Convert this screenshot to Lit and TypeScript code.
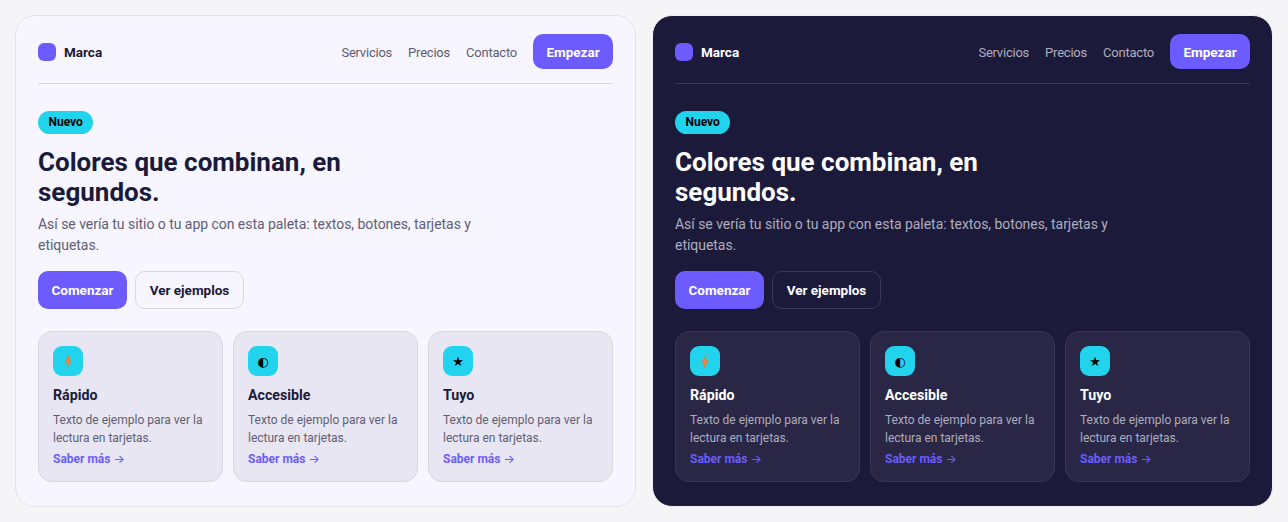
import { LitElement, html, css } from "lit";
import { customElement, property } from "lit/decorators.js";

const CARDS = [
  { icon: "⚡", title: "Rápido", emoji: true },
  { icon: "◐", title: "Accesible", emoji: false },
  { icon: "★", title: "Tuyo", emoji: false },
];

@customElement("preview-panel")
class PreviewPanel extends LitElement {
  @property({ type: Boolean, reflect: true }) dark = false;
  static styles = css`
    :host {
      display: block;
      box-sizing: border-box;
      height: 492px;
      padding: 18px 22px 24px;
      border: 1px solid #e3e2ea;
      border-radius: 20px;
      background: #f7f5ff;
      color: #1a1a3a;
      font-family: Roboto, "Noto Sans", sans-serif;
      --muted: #5f5e74;
      --line: #d7d6e2;
      --card: #e8e6f2;
    }
    :host([dark]) {
      background: #1c1a3a;
      border-color: #eeeef3;
      color: #ffffff;
      --muted: #aeadbe;
      --line: #393752;
      --card: #292745;
    }
    .nav {
      display: flex;
      align-items: center;
      justify-content: space-between;
      padding-bottom: 14px;
      border-bottom: 1px solid var(--line);
    }
    .brand {
      display: flex;
      align-items: center;
      gap: 8px;
      font-size: 13.5px;
      font-weight: 700;
    }
    .logo {
      width: 18px;
      height: 18px;
      border-radius: 6px;
      background: #6c5cff;
    }
    .links {
      display: flex;
      align-items: center;
      gap: 16px;
      font-size: 13px;
      letter-spacing: -0.22px;
      color: var(--muted);
    }
    .link {
      padding-top: 2px;
    }
    .btn {
      display: flex;
      align-items: center;
      justify-content: center;
      box-sizing: border-box;
      font-weight: 700;
      font-size: 13.5px;
      letter-spacing: 0;
    }
    .primary {
      background: #6c5cff;
      color: #fff;
    }
    .nav .btn {
      height: 35px;
      width: 80px;
      border-radius: 10px;
    }
    .hero {
      padding-top: 27px;
    }
    .badge {
      display: inline-block;
      padding: 0 10.5px;
      height: 23px;
      line-height: 23px;
      border-radius: 999px;
      background: #22d3ee;
      color: #000;
      font-size: 12px;
      font-weight: 700;
      vertical-align: top;
    }
    h1 {
      margin: 13px 0 0;
      max-width: 340px;
      font-size: 26px;
      line-height: 30px;
      font-weight: 700;
    }
    .lead {
      margin: 7px 0 0;
      max-width: 460px;
      font-size: 14px;
      line-height: 21px;
      letter-spacing: -0.04px;
      color: var(--muted);
    }
    .actions {
      display: flex;
      gap: 8px;
      margin-top: 15px;
    }
    .actions .btn {
      height: 38px;
      border-radius: 10px;
    }
    .actions .primary {
      width: 89px;
    }
    .ghost {
      width: 109px;
      border: 1px solid var(--line);
    }
    .cards {
      display: grid;
      grid-template-columns: repeat(3, 1fr);
      gap: 10px;
      margin-top: 22px;
    }
    .card {
      box-sizing: border-box;
      height: 151px;
      padding: 14px;
      border: 1px solid var(--line);
      border-radius: 14px;
      background: var(--card);
    }
    .icon {
      display: flex;
      align-items: center;
      justify-content: center;
      width: 30px;
      height: 30px;
      border-radius: 9px;
      background: #22d3ee;
      color: #000;
      font-size: 13px;
      font-family: "DejaVu Sans", sans-serif;
    }
    .icon svg {
      width: 8px;
      height: 15px;
    }
    h3 {
      margin: 9px 0 0;
      font-size: 14.2px;
      line-height: 20px;
      font-weight: 700;
    }
    .card p {
      margin: 6px 0 0;
      font-size: 12px;
      line-height: 18px;
      color: var(--muted);
    }
    .more {
      display: block;
      margin-top: 3px;
      font-size: 12px;
      line-height: 18px;
      font-weight: 700;
      color: #6c5cff;
    }
    .arrow {
      font-family: Inter, sans-serif;
      font-weight: 500;
    }
  `;
  render() {
    return html`
      <div class="nav">
        <div class="brand"><span class="logo"></span>Marca</div>
        <div class="links">
          <span class="link">Servicios</span><span class="link">Precios</span><span class="link">Contacto</span>
          <span class="btn primary">Empezar</span>
        </div>
      </div>
      <div class="hero">
        <span class="badge">Nuevo</span>
        <h1>Colores que combinan, en segundos.</h1>
        <p class="lead">Así se vería tu sitio o tu app con esta paleta: textos, botones, tarjetas y etiquetas.</p>
        <div class="actions">
          <span class="btn primary">Comenzar</span>
          <span class="btn ghost">Ver ejemplos</span>
        </div>
      </div>
      <div class="cards">
        ${CARDS.map(
          (c) => html`
            <div class="card">
              <div class="icon">
                ${c.emoji
                  ? html`<svg viewBox="0 0 8 15">
                      <path d="M5.4 0 .2 8.6h3L2.6 15l5.2-8.8H4.8z" fill="#ea7d3a" />
                      <path d="M4.3 5.2 3.2 7.6h1.2l-.2 2.2 1.1-2.4H4.1z" fill="#f2a866" />
                    </svg>`
                  : c.icon}
              </div>
              <h3>${c.title}</h3>
              <p>Texto de ejemplo para ver la lectura en tarjetas.</p>
              <span class="more">Saber más <span class="arrow">→</span></span>
            </div>
          `
        )}
      </div>
    `;
  }
}

@customElement("app-root")
class AppRoot extends LitElement {
  static styles = css`
    :host {
      display: grid;
      grid-template-columns: 1fr 1fr;
      gap: 16px;
      padding: 15px;
      box-sizing: border-box;
      width: 1288px;
      height: 522px;
      background: #f5f5f7;
    }
  `;
  render() {
    return html`<preview-panel></preview-panel><preview-panel dark></preview-panel>`;
  }
}
